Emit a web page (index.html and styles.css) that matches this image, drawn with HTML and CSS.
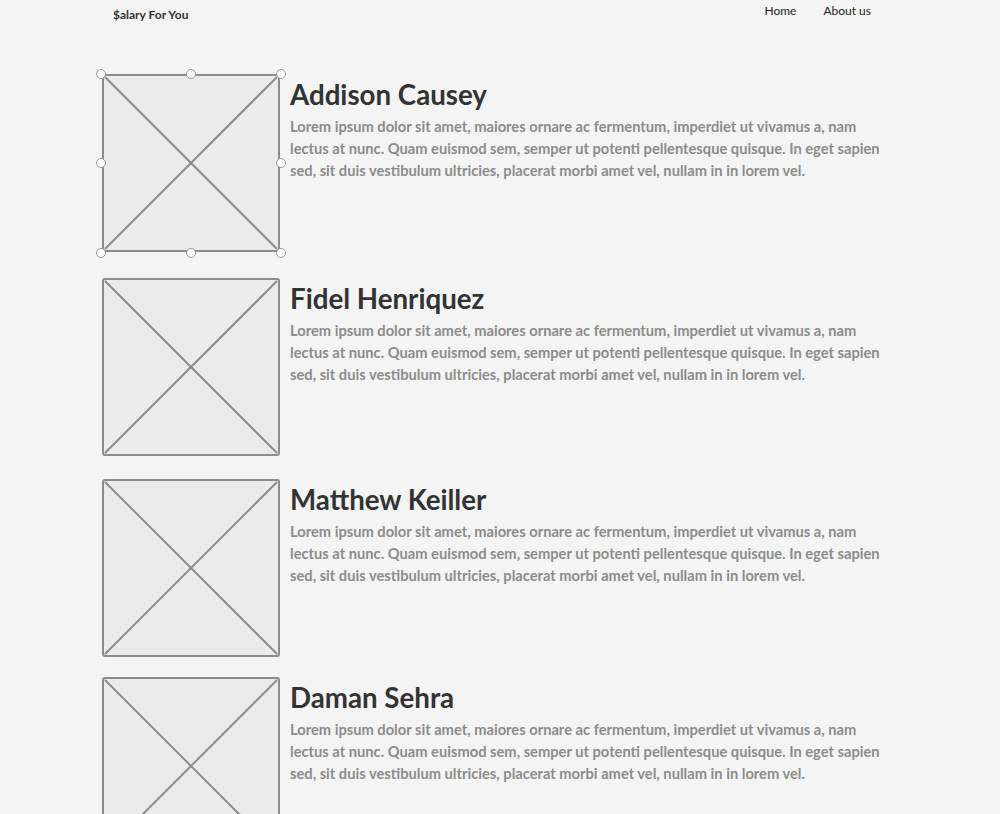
FILE: index.html
```html
<!DOCTYPE html>
<html lang="en">
<head>
<meta charset="utf-8">
<title>Salary For You</title>
<link rel="stylesheet" href="styles.css">
</head>
<body>
<header class="topbar">
  <div class="brand">$alary For You</div>
  <nav class="nav">
    <a class="nav-link" href="#">Home</a>
    <a class="nav-link" href="#">About us</a>
  </nav>
</header>
<main class="list">
  <article class="person person-1">
    <div class="thumb selected">
      <svg class="ph" viewBox="0 0 178 178" preserveAspectRatio="none"><line x1="1" y1="1" x2="177" y2="177"/><line x1="177" y1="1" x2="1" y2="177"/></svg>
      <span class="handle h-tl"></span><span class="handle h-tc"></span><span class="handle h-tr"></span>
      <span class="handle h-ml"></span><span class="handle h-mr"></span>
      <span class="handle h-bl"></span><span class="handle h-bc"></span><span class="handle h-br"></span>
    </div>
    <div class="info">
      <h2 class="name">Addison Causey</h2>
      <p class="desc">Lorem ipsum dolor sit amet, maiores ornare ac fermentum, imperdiet ut vivamus a, nam lectus at nunc. Quam euismod sem, semper ut potenti pellentesque quisque. In eget sapien sed, sit duis vestibulum ultricies, placerat morbi amet vel, nullam in in lorem vel.</p>
    </div>
  </article>
  <article class="person person-2">
    <div class="thumb">
      <svg class="ph" viewBox="0 0 178 178" preserveAspectRatio="none"><line x1="1" y1="1" x2="177" y2="177"/><line x1="177" y1="1" x2="1" y2="177"/></svg>
    </div>
    <div class="info">
      <h2 class="name">Fidel Henriquez</h2>
      <p class="desc">Lorem ipsum dolor sit amet, maiores ornare ac fermentum, imperdiet ut vivamus a, nam lectus at nunc. Quam euismod sem, semper ut potenti pellentesque quisque. In eget sapien sed, sit duis vestibulum ultricies, placerat morbi amet vel, nullam in in lorem vel.</p>
    </div>
  </article>
  <article class="person person-3">
    <div class="thumb">
      <svg class="ph" viewBox="0 0 178 178" preserveAspectRatio="none"><line x1="1" y1="1" x2="177" y2="177"/><line x1="177" y1="1" x2="1" y2="177"/></svg>
    </div>
    <div class="info">
      <h2 class="name">Matthew Keiller</h2>
      <p class="desc">Lorem ipsum dolor sit amet, maiores ornare ac fermentum, imperdiet ut vivamus a, nam lectus at nunc. Quam euismod sem, semper ut potenti pellentesque quisque. In eget sapien sed, sit duis vestibulum ultricies, placerat morbi amet vel, nullam in in lorem vel.</p>
    </div>
  </article>
  <article class="person person-4">
    <div class="thumb">
      <svg class="ph" viewBox="0 0 178 178" preserveAspectRatio="none"><line x1="1" y1="1" x2="177" y2="177"/><line x1="177" y1="1" x2="1" y2="177"/></svg>
    </div>
    <div class="info">
      <h2 class="name">Daman Sehra</h2>
      <p class="desc">Lorem ipsum dolor sit amet, maiores ornare ac fermentum, imperdiet ut vivamus a, nam lectus at nunc. Quam euismod sem, semper ut potenti pellentesque quisque. In eget sapien sed, sit duis vestibulum ultricies, placerat morbi amet vel, nullam in in lorem vel.</p>
    </div>
  </article>
</main>
</body>
</html>
```
FILE: styles.css
```css
html, body {
  margin: 0;
  padding: 0;
  background: #f4f4f4;
}
body {
  font-family: Lato, "Open Sans", sans-serif;
  color: #333;
}
.topbar {
  display: flex;
  justify-content: space-between;
  align-items: flex-start;
  padding: 0 129px 0 113px;
  height: 74px;
}
.brand {
  font-size: 12px;
  font-weight: 700;
  color: #333;
  margin-top: 8px;
  line-height: 14px;
}
.nav {
  display: flex;
  gap: 27px;
  margin-top: 4px;
}
.nav-link {
  font-size: 12px;
  color: #222;
  text-decoration: none;
  line-height: 14px;
}
.list {
  display: flex;
  flex-direction: column;
  padding-left: 102px;
}
.person {
  display: flex;
  align-items: flex-start;
  gap: 10px;
}
.person-1 { margin-bottom: 26px; }
.person-2 { margin-bottom: 23px; }
.person-3 { margin-bottom: 20px; }
.thumb {
  position: relative;
  flex: none;
  width: 178px;
  height: 178px;
  box-sizing: border-box;
  border: 2px solid #8c8c8c;
  border-radius: 3px;
  background: #ebebeb;
}
.ph {
  display: block;
  width: 100%;
  height: 100%;
}
.ph line {
  stroke: #8c8c8c;
  stroke-width: 2;
}
.handle {
  position: absolute;
  width: 10px;
  height: 10px;
  box-sizing: border-box;
  border: 1px solid #9a9a9a;
  border-radius: 50%;
  background: #fff;
}
.h-tl { left: -8px; top: -7px; }
.h-tc { left: 82px; top: -7px; }
.h-tr { left: 172px; top: -7px; }
.h-ml { left: -8px; top: 82px; }
.h-mr { left: 172px; top: 82px; }
.h-bl { left: -8px; top: 172px; }
.h-bc { left: 82px; top: 172px; }
.h-br { left: 172px; top: 172px; }
.info {
  width: 600px;
}
.name {
  margin: 4px 0 0;
  font-size: 27.7px;
  font-weight: 700;
  line-height: 34px;
  color: #333;
}
.desc {
  margin: 3px 0 0;
  font-size: 14.7px;
  font-weight: 700;
  line-height: 22px;
  color: #8c8c8c;
}
```
